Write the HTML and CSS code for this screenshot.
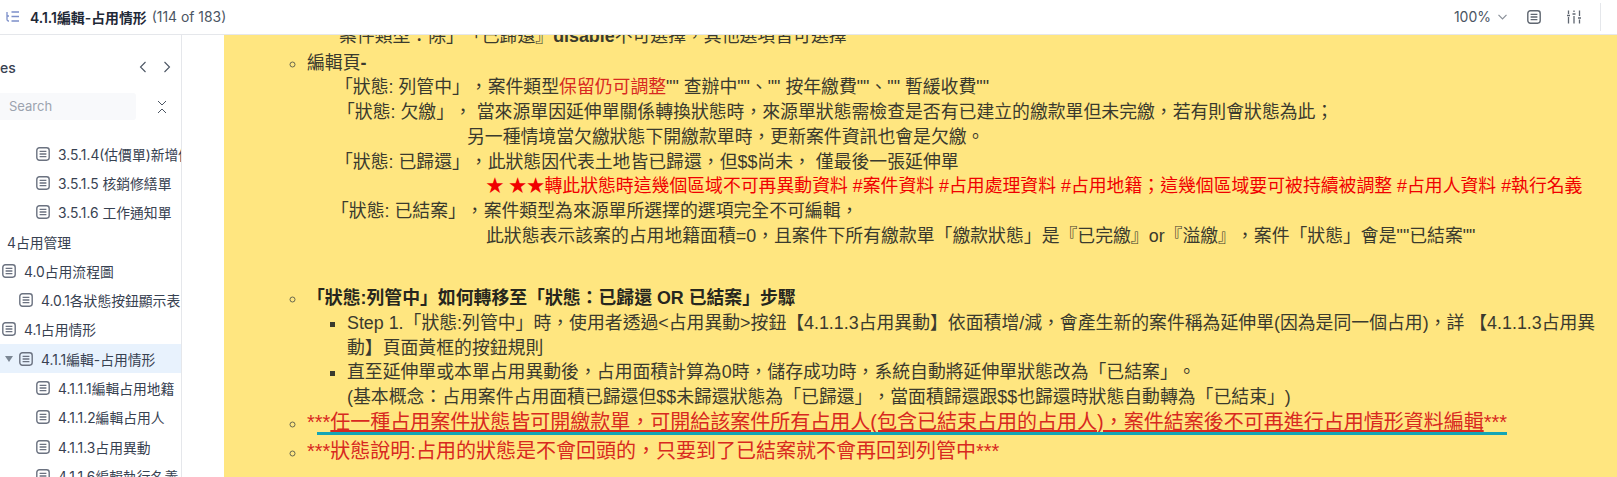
FILE: index.html

```html
<!DOCTYPE html>
<html lang="zh-Hant">
<head>
    <meta charset="UTF-8">
    <title>4.1.1編輯-占用情形</title>
    <link rel="stylesheet" href="styles.css">
</head>
<body>
    <svg class="defs" width="0" height="0">
        <symbol id="doc" viewBox="0 0 14 14">
            <rect x="0.8" y="0.8" width="12.4" height="12.4" rx="2.6" fill="none" stroke="currentColor" stroke-width="1.4"/>
            <path d="M3.6 4.4h6.8M3.6 7h6.8M3.6 9.6h6.8" fill="none" stroke="currentColor" stroke-width="1.3"/>
        </symbol>
    </svg>

    <header class="topbar">
        <svg class="toc-icon" width="14" height="11" viewBox="0 0 14 11">
            <path d="M1 1v7.5q0 1.5 1.500 1.500H3" fill="none" stroke="#7c8fc9" stroke-width="1.300"/>
            <path d="M1 5h2M5.500 1H13M5.500 5.500H13M5.500 10H13" fill="none" stroke="#7c8fc9" stroke-width="1.500"/>
        </svg>
        <span class="page-title">4.1.1編輯-占用情形</span>
        <span class="page-count">(114 of 183)</span>
        <div class="tools">
            <span class="zoom-level">100%</span>
            <svg class="chevron" width="9" height="6" viewBox="0 0 9 6"><path d="M0.500 0.800L4.500 4.800L8.500 0.800" fill="none" stroke="#8a9099" stroke-width="1.200"/></svg>
            <svg class="tool-doc"><use href="#doc"/></svg>
            <svg class="sliders" width="14" height="14" viewBox="0 0 14 14">
                <path d="M1.500 0.500v3.500M1.500 7v6.500M7 0.500v1.500M7 6v7.500M12.500 0.500v5.500M12.500 9.500v4M0 5.500h3M5.500 4h3M11 8h3" fill="none" stroke="#5f6670" stroke-width="1.300"/>
            </svg>
            <span class="divider"></span>
        </div>
    </header>

    <div class="body-row">
        <aside class="sidebar">
            <div class="side-head">
                <span class="side-title">es</span>
                <svg class="pager" width="8" height="12" viewBox="0 0 8 12"><path d="M6.500 1L1.500 6L6.500 11" fill="none" stroke="#4b5563" stroke-width="1.100"/></svg>
                <svg class="pager" width="8" height="12" viewBox="0 0 8 12"><path d="M1.500 1L6.500 6L1.500 11" fill="none" stroke="#4b5563" stroke-width="1.100"/></svg>
            </div>
            <div class="search-row">
                <div class="search-box">Search</div>
                <svg class="collapse" width="10" height="14" viewBox="0 0 10 14"><path d="M1 1L5 5L9 1M1 13L5 9L9 13" fill="none" stroke="#4b5563" stroke-width="1"/></svg>
            </div>
            <ul class="tree">
                <li class="node l3"><svg class="doc-icon"><use href="#doc"/></svg>3.5.1.4(估價單)新增修繕單</li>
                <li class="node l3"><svg class="doc-icon"><use href="#doc"/></svg>3.5.1.5 核銷修繕單</li>
                <li class="node l3"><svg class="doc-icon"><use href="#doc"/></svg>3.5.1.6 工作通知單</li>
                <li class="node l0">4占用管理</li>
                <li class="node l1"><svg class="doc-icon"><use href="#doc"/></svg>4.0占用流程圖</li>
                <li class="node l2"><svg class="doc-icon"><use href="#doc"/></svg>4.0.1各狀態按鈕顯示表</li>
                <li class="node l1"><svg class="doc-icon"><use href="#doc"/></svg>4.1占用情形</li>
                <li class="node l2 active"><span class="caret"></span><svg class="doc-icon"><use href="#doc"/></svg>4.1.1編輯-占用情形</li>
                <li class="node l3"><svg class="doc-icon"><use href="#doc"/></svg>4.1.1.1編輯占用地籍</li>
                <li class="node l3"><svg class="doc-icon"><use href="#doc"/></svg>4.1.1.2編輯占用人</li>
                <li class="node l3"><svg class="doc-icon"><use href="#doc"/></svg>4.1.1.3占用異動</li>
                <li class="node l3"><svg class="doc-icon"><use href="#doc"/></svg>4.1.1.6編輯執行名義</li>
            </ul>
        </aside>

        <main class="viewer">
            <div class="note">
                <div class="ln in-top">案件類型：除」「已歸還』<b>disable</b>不可選擇，其他選項皆可選擇</div>
                <ul class="outer">
                    <li>編輯頁<b>-</b>
                        <div class="ln in-a">「狀態: 列管中」，案件類型<span class="red">保留仍可調整</span>"" 查辦中""、"" 按年繳費""、"" 暫緩收費""</div>
                        <div class="ln in-e">「狀態: 欠繳」， 當來源單因延伸單關係轉換狀態時，來源單狀態需檢查是否有已建立的繳款單但未完繳，若有則會狀態為此；</div>
                        <div class="ln in-b">另一種情境當欠繳狀態下開繳款單時，更新案件資訊也會是欠繳。</div>
                        <div class="ln in-a">「狀態: 已歸還」，此狀態因代表土地皆已歸還，但$$尚未， 僅最後一張延伸單</div>
                        <div class="ln in-c bright">★ ★★轉此狀態時這幾個區域不可再異動資料 #案件資料 #占用處理資料 #占用地籍；這幾個區域要可被持續被調整 #占用人資料 #執行名義</div>
                        <div class="ln in-d">「狀態: 已結案」，案件類型為來源單所選擇的選項完全不可編輯，</div>
                        <div class="ln in-c">此狀態表示該案的占用地籍面積=0，且案件下所有繳款單「繳款狀態」是『已完繳』or『溢繳』，案件「狀態」會是""已結案""</div>
                    </li>
                    <li class="gap-top"><strong>「狀態:列管中」如何轉移至「狀態：已歸還 OR 已結案」步驟</strong>
                        <ul class="inner">
                            <li>Step 1.「狀態:列管中」時，使用者透過&lt;占用異動&gt;按鈕【4.1.1.3占用異動】依面積增/減，會產生新的案件稱為延伸單(因為是同一個占用)，詳 【4.1.1.3占用異動】頁面黃框的按鈕規則</li>
                            <li>直至延伸單或本單占用異動後，占用面積計算為0時，儲存成功時，系統自動將延伸單狀態改為「已結案」。<br>(基本概念：占用案件占用面積已歸還但$$未歸還狀態為「已歸還」，當面積歸還跟$$也歸還時狀態自動轉為「已結束」)</li>
                        </ul>
                    </li>
                    <li class="red big marked">***<u>任一種占用案件狀態皆可開繳款單，可開給該案件所有占用人(包含已結束占用的占用人)，案件結案後不可再進行占用情形資料編輯</u>***</li>
                    <li class="red big last">***狀態說明:占用的狀態是不會回頭的，只要到了已結案就不會再回到列管中***</li>
                </ul>
            </div>
        </main>
    </div>
</body>
</html>
```

FILE: styles.css

```css
html, body {
    margin: 0;
    height: 100%;
    overflow: hidden;
}

body {
    display: flex;
    flex-direction: column;
    background-color: #fff;
    font-family: Inter, "Noto Sans CJK TC", sans-serif;
    color: #374151;
}

.defs {
    position: absolute;
}

.topbar {
    display: flex;
    align-items: center;
    flex: 0 0 35px;
    box-sizing: border-box;
    padding: 0 0 1px 6px;
    border-bottom: 1px solid #e5e7eb;
    font-size: 13.900px;
    white-space: nowrap;
}

.toc-icon {
    margin-right: 10px;
}

.page-title {
    font-weight: 600;
    color: #1f2937;
}

.page-count {
    margin-left: 5px;
    color: #4b5563;
}

.tools {
    display: flex;
    align-items: center;
    margin-left: auto;
}

.zoom-level {
    font-size: 14px;
    color: #4b5563;
}

.chevron {
    margin: 0 20px 0 7px;
}

.tool-doc {
    width: 14px;
    height: 14px;
    margin-right: 26px;
    color: #5f6670;
}

.divider {
    width: 1px;
    height: 28px;
    margin: 0 16px 0 19px;
    background-color: #e5e7eb;
}

.body-row {
    display: flex;
    flex: 1;
    min-height: 0;
}

.sidebar {
    flex: 0 0 182px;
    box-sizing: border-box;
    border-right: 1px solid #e5e7eb;
    overflow: hidden;
}

.side-head {
    display: flex;
    align-items: center;
    height: 24px;
    margin-top: 20px;
    font-size: 14px;
    font-weight: 500;
}

.side-title {
    flex: 0 0 139px;
}

.pager {
    flex: none;
    margin-right: 16px;
}

.search-row {
    display: flex;
    align-items: center;
    margin-top: 14px;
}

.search-box {
    box-sizing: border-box;
    width: 136px;
    height: 27px;
    padding-left: 9px;
    background-color: #f8f9fb;
    border-radius: 0 3px 3px 0;
    font-size: 13px;
    line-height: 27px;
    color: #9ca3af;
}

.collapse {
    margin-left: 21px;
}

.tree {
    list-style: none;
    margin: 19px 0 0;
    padding: 0;
}

.node {
    position: relative;
    display: flex;
    align-items: center;
    box-sizing: border-box;
    height: 29.3px;
    font-size: 13.800px;
    white-space: nowrap;
}

.l0 { padding-left: 7px; }
.l1 { padding-left: 2px; }
.l2 { padding-left: 19px; }
.l3 { padding-left: 36px; }

.doc-icon {
    flex: none;
    width: 14px;
    height: 14px;
    margin-right: 8px;
    color: #6b7280;
}

.active {
    background-color: #e8f2fd;
}

.caret {
    position: absolute;
    left: 5px;
    top: 12px;
    border-left: 4px solid transparent;
    border-right: 4px solid transparent;
    border-top: 6px solid #7b8794;
}

.viewer {
    flex: 1;
    min-width: 0;
    margin-left: 42px;
    background-color: #ffe680;
    overflow: hidden;
}

.note {
    margin-top: -11px;
    font-family: "Liberation Sans", "Noto Sans CJK TC", sans-serif;
    font-size: 17.850px;
    line-height: 24.700px;
    color: #3a3a2e;
    white-space: nowrap;
    text-spacing-trim: space-all;
}

.ln {
    white-space: nowrap;
}

.in-top { padding-left: 115px; }
.in-a { padding-left: 28px; }
.in-b { padding-left: 160px; }
.in-c { padding-left: 179px; }
.in-d { padding-left: 24px; }
.in-e { padding-left: 30px; }

.outer {
    list-style: circle;
    margin: 2px 0 0;
    padding-left: 83px;
}

.outer > li::marker {
    color: #66664f;
    font-size: 17.850px;
}

.gap-top {
    margin-top: 38px;
}

strong {
    font-weight: 700;
    color: #26261e;
}

.inner {
    list-style: square;
    margin: 0;
    padding-left: 40px;
    white-space: normal;
    width: 1268px;
}

.red {
    color: #d8291f;
}

.bright {
    color: #f00000;
}

.big {
    font-size: 20px;
}

.marked {
    position: relative;
}

/* teal pen stroke drawn over the page */
.marked::after {
    content: "";
    position: absolute;
    left: 10px;
    top: 22px;
    width: 1190px;
    height: 3px;
    background-color: #14a5b5;
}

.last {
    margin-top: 4px;
}
```
